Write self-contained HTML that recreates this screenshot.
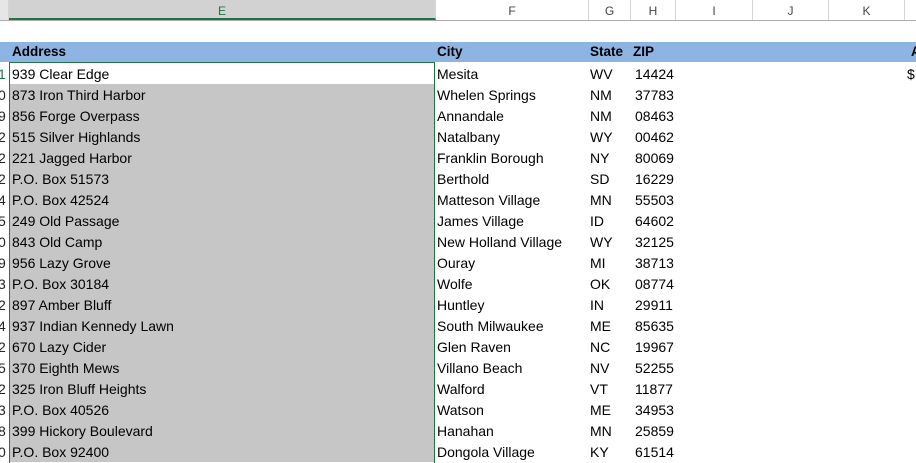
<!DOCTYPE html><html><head><style>
body{margin:0;width:916px;height:463px;overflow:hidden;background:#fff;font-family:"Liberation Sans",sans-serif;position:relative}
.hdr{position:absolute;top:0;left:0;width:916px;height:20px;background:#fff;border-bottom:1px solid #ababab;font-size:12px;color:#444}
.hc{position:absolute;top:0;height:20px;line-height:22px;text-align:center;border-right:1px solid #d4d4d4}
.blue{position:absolute;top:42px;left:0;width:916px;height:20px;background:#8db4e2;font-weight:bold;font-size:13.5px}
.t{position:absolute;white-space:nowrap}
.row{position:absolute;left:0;width:916px;height:21px;font-size:14px;line-height:22px}
.sel{position:absolute;left:9px;width:426px;top:62px;height:401px;border:1.5px solid #217346;border-bottom:none;box-sizing:border-box}
</style></head><body>
<div class="hdr">
<div class="hc" style="left:0;width:8px;background:#e6e6e6"></div>
<div class="hc" style="left:9px;width:426px;background:#d2d2d2;color:#217346;border-bottom:2px solid #217346;height:18px">E</div>
<div class="hc" style="left:436px;width:152px">F</div>
<div class="hc" style="left:589px;width:41px">G</div>
<div class="hc" style="left:631px;width:44px">H</div>
<div class="hc" style="left:676px;width:76px">I</div>
<div class="hc" style="left:753px;width:75px">J</div>
<div class="hc" style="left:829px;width:75px">K</div>
</div>
<div class="blue">
<span class="t" style="left:12px;top:2px">Address</span>
<span class="t" style="left:437px;top:2px">City</span>
<span class="t" style="left:590px;top:2px">State</span>
<span class="t" style="left:633px;top:2px">ZIP</span>
<span class="t" style="left:911px;top:2px">A</span>
</div>
<div id="rows"></div>
<div class="sel"></div>
<script>
var d=[["939 Clear Edge","Mesita","WV","14424"],["873 Iron Third Harbor","Whelen Springs","NM","37783"],["856 Forge Overpass","Annandale","NM","08463"],["515 Silver Highlands","Natalbany","WY","00462"],["221 Jagged Harbor","Franklin Borough","NY","80069"],["P.O. Box 51573","Berthold","SD","16229"],["P.O. Box 42524","Matteson Village","MN","55503"],["249 Old Passage","James Village","ID","64602"],["843 Old Camp","New Holland Village","WY","32125"],["956 Lazy Grove","Ouray","MI","38713"],["P.O. Box 30184","Wolfe","OK","08774"],["897 Amber Bluff","Huntley","IN","29911"],["937 Indian Kennedy Lawn","South Milwaukee","ME","85635"],["670 Lazy Cider","Glen Raven","NC","19967"],["370 Eighth Mews","Villano Beach","NV","52255"],["325 Iron Bluff Heights","Walford","VT","11877"],["P.O. Box 40526","Watson","ME","34953"],["399 Hickory Boulevard","Hanahan","MN","25859"],["P.O. Box 92400","Dongola Village","KY","61514"]];
var n="1092224509324252380",h="";
d.forEach(function(r,i){var y=63+i*21;
h+='<div class="row" style="top:'+y+'px">'+(i>0?'<div style="position:absolute;left:9px;top:0;width:426px;height:21px;background:#c6c6c6"></div>':'')+
'<span class="t" style="left:-2px;color:'+(i==0?'#217346':'#222')+'">'+n[i]+'</span>'+
'<span class="t" style="left:12px">'+r[0]+'</span><span class="t" style="left:437px">'+r[1]+'</span><span class="t" style="left:590px">'+r[2]+'</span><span class="t" style="left:635px">'+r[3]+'</span>'+(i==0?'<span class="t" style="left:907px">$</span>':'')+'</div>';});
document.getElementById('rows').innerHTML=h;
</script>
</body></html>
